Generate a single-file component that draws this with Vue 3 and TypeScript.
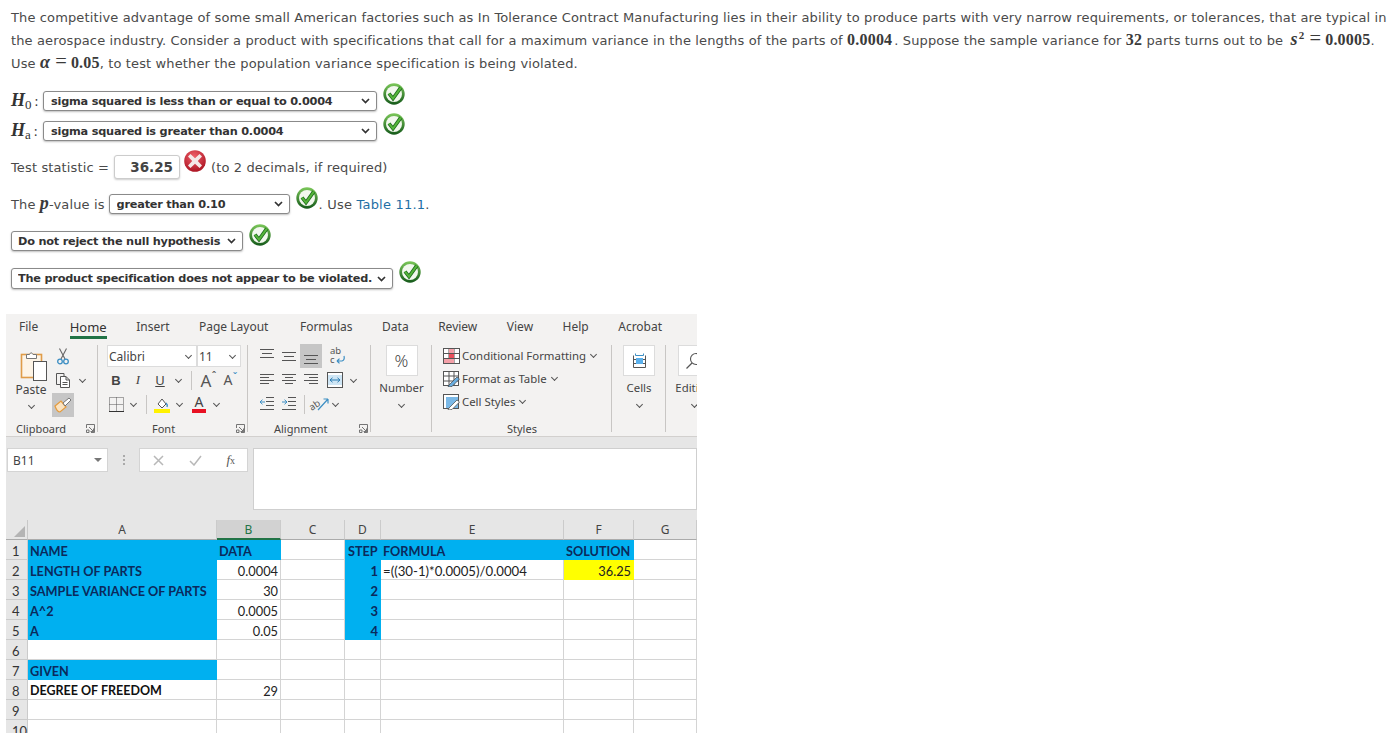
<script setup lang="ts">
type Cell = { t?: string; k?: string }
const B = 'blue'
const rows: Cell[][] = [
  [{ t: 'NAME', k: B }, { t: 'DATA', k: B }, {}, { t: 'STEP', k: B + ' step' }, { t: 'FORMULA', k: B }, { t: 'SOLUTION', k: B }, {}],
  [{ t: 'LENGTH OF PARTS', k: B }, { t: '0.0004', k: 'num' }, {}, { t: '1', k: B + ' num' }, { t: '=((30-1)*0.0005)/0.0004' }, { t: '36.25', k: 'yellow num' }, {}],
  [{ t: 'SAMPLE VARIANCE OF PARTS', k: B }, { t: '30', k: 'num' }, {}, { t: '2', k: B + ' num' }, {}, {}, {}],
  [{ t: 'A^2', k: B }, { t: '0.0005', k: 'num' }, {}, { t: '3', k: B + ' num' }, {}, {}, {}],
  [{ t: 'A', k: B }, { t: '0.05', k: 'num' }, {}, { t: '4', k: B + ' num' }, {}, {}, {}],
  [{}, {}, {}, {}, {}, {}, {}],
  [{ t: 'GIVEN', k: B }, {}, {}, {}, {}, {}, {}],
  [{ t: 'DEGREE OF FREEDOM', k: 'strong' }, { t: '29', k: 'num' }, {}, {}, {}, {}, {}],
  [{}, {}, {}, {}, {}, {}, {}],
  [{}, {}, {}, {}, {}, {}, {}],
]
const cols = ['A', 'B', 'C', 'D', 'E', 'F', 'G']
const tabs = ['File', 'Home', 'Insert', 'Page Layout', 'Formulas', 'Data', 'Review', 'View', 'Help', 'Acrobat']
</script>

<template>
  <div class="page">
    <svg class="defs" width="0" height="0" aria-hidden="true">
      <defs>
        <linearGradient id="gg" x1="0" y1="0" x2="0" y2="1">
          <stop offset="0" stop-color="#7cc85a" />
          <stop offset="1" stop-color="#14591a" />
        </linearGradient>
        <radialGradient id="rg" cx="45%" cy="30%" r="75%">
          <stop offset="0" stop-color="#f0606a" />
          <stop offset="1" stop-color="#a80f1e" />
        </radialGradient>
        <symbol id="ok" viewBox="0 0 22 22">
          <circle cx="11" cy="11" r="10.7" fill="url(#gg)" />
          <circle cx="11" cy="11" r="8" fill="#f2f8ee" />
          <path d="M6 10.5 L10 15.5 L17.8 4.6" fill="none" stroke="#1e6b1e" stroke-width="3.6" />
          <path d="M6 10.5 L10 15.5 L17.8 4.6" fill="none" stroke="#55b53a" stroke-width="2" />
        </symbol>
      </defs>
    </svg>

    <div class="question">
      <p class="line">The competitive advantage of some small American factories such as In Tolerance Contract Manufacturing lies in their ability to produce parts with very narrow requirements, or tolerances, that are typical in</p>
      <p class="line">the aerospace industry. Consider a product with specifications that call for a maximum variance in the lengths of the parts of <span class="m first">0.0004</span>. Suppose the sample variance for <span class="m">32</span> parts turns out to be <span class="m squared"><i>s</i><sup>2</sup><span class="eq">=</span>0.0005</span>.</p>
      <p class="line">Use <span class="m"><i>α</i><span class="eq">=</span>0.05</span>, to test whether the population variance specification is being violated.</p>

      <div class="row r-h0">
        <span class="hyp"><i>H</i><sub>0</sub><span class="colon">:</span></span>
        <select class="sel w334"><option>sigma squared is less than or equal to 0.0004</option></select>
        <svg class="mark m0"><use href="#ok" /></svg>
      </div>
      <div class="row r-ha">
        <span class="hyp"><i>H</i><sub>a</sub><span class="colon">:</span></span>
        <select class="sel w334"><option>sigma squared is greater than 0.0004</option></select>
        <svg class="mark m0"><use href="#ok" /></svg>
      </div>
      <div class="row r-test">
        <span>Test statistic =</span>
        <input class="ans" value="36.25" readonly />
        <svg class="mark bad" viewBox="0 0 22 22">
          <circle cx="11" cy="11" r="10.8" fill="url(#rg)" />
          <path d="M6.5 4 L11 8.2 L15.5 4 L18 6.5 L13.8 11 L18 15.5 L15.5 18 L11 13.8 L6.5 18 L4 15.5 L8.2 11 L4 6.5 Z" fill="#f4e8e8" />
        </svg>
        <span class="after">(to 2 decimals, if required)</span>
      </div>
      <div class="row r-p">
        <span>The <span class="m"><i>p</i></span>-value is</span>
        <select class="sel w181"><option>greater than 0.10</option></select>
        <svg class="mark m1"><use href="#ok" /></svg>
        <span class="use">. Use <a class="link">Table 11.1</a>.</span>
      </div>
      <div class="row r-c">
        <select class="sel w232"><option>Do not reject the null hypothesis</option></select>
        <svg class="mark m1"><use href="#ok" /></svg>
      </div>
      <div class="row r-d">
        <select class="sel w382"><option>The product specification does not appear to be violated.</option></select>
        <svg class="mark m1"><use href="#ok" /></svg>
      </div>
    </div>

    <div class="excel">
      <div class="tabs">
        <span v-for="t in tabs" :key="t" class="tab" :class="{ on: t === 'Home' }">{{ t }}</span>
      </div>

      <div class="ribbon">
        <!-- Clipboard -->
        <section class="group g-clip">
          <div class="body flexrow">
            <div class="bigcol paste">
              <svg class="paste-ico" width="27" height="31" viewBox="0 0 27 31">
                <rect x="1.5" y="4.5" width="20" height="23" fill="#fdf4e6" stroke="#e09c48" stroke-width="1.6" />
                <path d="M6.5 8.5 V4.5 H9.5 Q11 1 13 4.5 H16.5 V8.5 Z" fill="#fff" stroke="#777" />
                <rect x="13.5" y="11.5" width="13" height="19" fill="#fff" stroke="#555" />
              </svg>
              <span class="bigt t-paste">Paste</span>
              <i class="chev"></i>
            </div>
            <div class="smallcol">
              <div class="cell w22">
                <svg width="12" height="17" viewBox="0 0 12 17">
                  <path d="M2.5 0.5 L8 11 M9.5 0.5 L4 11" stroke="#666" stroke-width="1.1" fill="none" />
                  <circle cx="3" cy="13.5" r="2.3" fill="none" stroke="#3d8fc4" stroke-width="1.3" />
                  <circle cx="9" cy="13.5" r="2.3" fill="none" stroke="#3d8fc4" stroke-width="1.3" />
                </svg>
              </div>
              <div class="flexrow">
                <div class="cell w22">
                  <svg width="16" height="16" viewBox="0 0 16 16">
                    <path d="M5.5 12.5 H1.5 V1.5 H9 V4" fill="none" stroke="#555" />
                    <path d="M5.5 4.5 H11 L14.5 8 V15.5 H5.5 Z M11 4.5 V8 H14.5 M7.5 10.5 H12.5 M7.5 12.5 H12.5" fill="#fff" stroke="#555" />
                  </svg>
                </div>
                <div class="cell w16"><i class="chev"></i></div>
              </div>
              <div class="cell w22 hl painter">
                <svg width="18" height="16" viewBox="0 0 18 16">
                  <path d="M1 9 L7 4 L12 10 L6 15 Q3 15 1 9 Z" fill="#fbe3c0" stroke="#e59b3c" stroke-width="1.2" />
                  <path d="M9 6 L15 1 L17 3 L11 9 Z" fill="#fff" stroke="#777" />
                </svg>
              </div>
            </div>
          </div>
          <footer class="label">
            <span class="lt clipt">Clipboard</span>
            <svg class="launch"><use href="#lch" /></svg>
          </footer>
        </section>

        <!-- Font -->
        <section class="group g-font">
          <div class="body">
            <div class="tool">
              <div class="combo c-name"><span>Calibri</span><i class="chev"></i></div>
              <div class="combo c-size"><span>11</span><i class="chev"></i></div>
            </div>
            <div class="tool">
              <div class="cell w22"><b class="glyph b">B</b></div>
              <div class="cell w22"><i class="glyph it">I</i></div>
              <div class="cell w22"><u class="glyph">U</u></div>
              <div class="cell w14"><i class="chev"></i></div>
              <span class="vsep s1"></span>
              <div class="cell w22"><span class="aa big">A<small>ˆ</small></span></div>
              <div class="cell w22"><span class="aa">A<small class="blue-t">ˇ</small></span></div>
            </div>
            <div class="tool">
              <div class="cell w22">
                <svg width="15" height="15" viewBox="0 0 15 15">
                  <path d="M0.5 0.5 H14.5 V14.5 H0.5 Z M7.5 0.5 V14.5 M0.5 7.5 H14.5" fill="none" stroke="#555" stroke-dasharray="1 1" />
                  <path d="M0 14.5 H15" stroke="#333" />
                </svg>
              </div>
              <div class="cell w12"><i class="chev"></i></div>
              <span class="vsep s2"></span>
              <div class="cell w22">
                <svg width="17" height="17" viewBox="0 0 17 17">
                  <path d="M4 8 L8 3 L12 8 L8 12 Z" fill="#fff" stroke="#555" />
                  <path d="M12 7 Q14 9 13 11" stroke="#3d8fc4" stroke-width="1.4" fill="none" />
                  <rect x="0" y="13" width="16" height="4" fill="#fff200" />
                </svg>
              </div>
              <div class="cell w12"><i class="chev"></i></div>
              <div class="cell w22 m3">
                <span class="fontcolor">A</span>
              </div>
              <div class="cell w12"><i class="chev"></i></div>
            </div>
          </div>
          <footer class="label">
            <span class="lt fontt">Font</span>
            <svg class="launch"><use href="#lch" /></svg>
          </footer>
        </section>

        <!-- Alignment -->
        <section class="group g-align">
          <div class="body">
            <div class="tool">
              <div class="cell w22"><svg class="al"><path d="M1 2.5H15M3 6.5H13M1 10.5H15" /></svg></div>
              <div class="cell w22"><svg class="al"><path d="M1 5.5H15M3 9.5H13M1 13.5H15" /></svg></div>
              <div class="cell w22 hl"><svg class="al"><path d="M1 8.5H15M3 12.5H13M1 16.5H15" /></svg></div>
              <div class="cell w22 ml4">
                <svg class="vis" width="18" height="20" viewBox="0 0 18 20">
                  <text x="2" y="8" class="ico-t">ab</text>
                  <text x="2" y="17" class="ico-t">c</text>
                  <path d="M9 15 H14 Q17 14 16 10 M9 15 L11.5 12.6 M9 15 L11.5 17.4" fill="none" stroke="#3d8fc4" stroke-width="1.2" />
                </svg>
              </div>
            </div>
            <div class="tool">
              <div class="cell w22"><svg class="al"><path d="M1 3.5H15M1 6.5H10M1 9.5H15M1 12.5H10" /></svg></div>
              <div class="cell w22"><svg class="al"><path d="M1 3.5H15M4 6.5H12M1 9.5H15M4 12.5H12" /></svg></div>
              <div class="cell w22"><svg class="al"><path d="M1 3.5H15M6 6.5H15M1 9.5H15M6 12.5H15" /></svg></div>
              <div class="cell w24 ml2">
                <svg width="16" height="16" viewBox="0 0 16 16">
                  <rect x="0.5" y="0.5" width="15" height="15" fill="#fff" stroke="#555" />
                  <rect x="1" y="3" width="14" height="10" fill="#cfe6f5" />
                  <path d="M3 8 H13 M3 8 L5.5 5.8 M3 8 L5.5 10.2 M13 8 L10.5 5.8 M13 8 L10.5 10.2" fill="none" stroke="#2b7cb3" />
                </svg>
              </div>
              <div class="cell w14"><i class="chev"></i></div>
            </div>
            <div class="tool">
              <div class="cell w22"><svg class="al"><path d="M7 2.5H15M7 6.5H15M7 10.5H15M1 14.5H15" /><path class="ar" d="M1 7H6M1 7L3.5 4.7M1 7L3.5 9.3" /></svg></div>
              <div class="cell w22"><svg class="al"><path d="M7 2.5H15M7 6.5H15M7 10.5H15M1 14.5H15" /><path class="ar" d="M1 7H6M6 7L3.5 4.7M6 7L3.5 9.3" /></svg></div>
              <span class="vsep s3"></span>
              <div class="cell w20 ml5">
                <svg class="vis" width="20" height="16" viewBox="0 0 20 16">
                  <text x="0" y="13" class="ico-t" transform="rotate(-35 4 11)">ab</text>
                  <path d="M8 14 L18 3 M18 3 H13.5 M18 3 V7.5" fill="none" stroke="#3d8fc4" stroke-width="1.2" />
                </svg>
              </div>
              <div class="cell w10"><i class="chev"></i></div>
            </div>
          </div>
          <footer class="label">
            <span class="lt alignt">Alignment</span>
            <svg class="launch"><use href="#lch" /></svg>
          </footer>
        </section>

        <!-- Number -->
        <section class="group g-num">
          <div class="body bigcol">
            <div class="bigbox"><span class="pct">%</span></div>
            <span class="bigt">Number</span>
            <i class="chev"></i>
          </div>
          <footer class="label"></footer>
        </section>

        <!-- Styles -->
        <section class="group g-styles">
          <div class="body">
            <div class="styleitem">
              <svg width="17" height="16" viewBox="0 0 17 16">
                <rect x="0.5" y="0.5" width="16" height="15" fill="#fff" stroke="#555" />
                <path d="M1 5.5H16M1 10.5H16M6 1V15M11 1V15" stroke="#555" />
                <rect x="6" y="6" width="5" height="4" fill="#e9505c" />
                <rect x="1" y="11" width="10" height="4" fill="#f4a0a8" />
                <rect x="6" y="1" width="5" height="4" fill="#f4a0a8" />
              </svg>
              <span>Conditional Formatting</span><i class="chev"></i>
            </div>
            <div class="styleitem">
              <svg width="17" height="16" viewBox="0 0 17 16">
                <rect x="0.5" y="0.5" width="15" height="14" fill="#fff" stroke="#555" />
                <path d="M1 5H15M1 10H15M6 1V15M11 1V15" stroke="#555" />
                <path d="M6 14 L14 6 L16.5 8 L9 15.5 L5 16 Z" fill="#6aaee0" stroke="#444" stroke-width="0.7" />
              </svg>
              <span>Format as Table</span><i class="chev"></i>
            </div>
            <div class="styleitem">
              <svg width="17" height="16" viewBox="0 0 17 16">
                <rect x="0.5" y="0.5" width="15" height="14" fill="#fff" stroke="#555" />
                <rect x="3" y="3" width="12" height="11" fill="#7ab8e6" />
                <path d="M6 14 L14 6 L16.5 8 L9 15.5 L5 16 Z" fill="#fff" stroke="#444" stroke-width="0.7" />
              </svg>
              <span>Cell Styles</span><i class="chev"></i>
            </div>
          </div>
          <footer class="label"><span class="lt stylest">Styles</span></footer>
        </section>

        <!-- Cells -->
        <section class="group g-cells">
          <div class="body bigcol">
            <div class="bigbox">
              <svg width="15" height="15" viewBox="0 0 15 15">
                <path d="M1.5 2.5V14.5H13.5V2.5M1.5 6.5H13.5M1.5 10.5H13.5" fill="none" stroke="#555" />
                <path d="M3.5 0.5V2.5H11.5V0.5" fill="none" stroke="#3d8fc4" />
                <rect x="4" y="5" width="7" height="6" fill="#5ab0ec" />
              </svg>
            </div>
            <span class="bigt">Cells</span>
            <i class="chev"></i>
          </div>
          <footer class="label"></footer>
        </section>

        <!-- Editing -->
        <section class="group g-edit">
          <div class="body bigcol">
            <div class="bigbox">
              <svg width="18" height="18" viewBox="0 0 18 18">
                <circle cx="11" cy="7" r="5.5" fill="none" stroke="#555" stroke-width="1.1" />
                <path d="M7 11 L1.5 16.5" stroke="#555" stroke-width="1.3" />
              </svg>
            </div>
            <span class="bigt">Editing</span>
            <i class="chev"></i>
          </div>
          <footer class="label"></footer>
        </section>

        <svg class="defs" width="0" height="0" aria-hidden="true">
          <symbol id="lch" viewBox="0 0 9 9">
            <path d="M0.5 4V0.5H8.5V8.5H5M3 3L7.5 7.5M7.5 4.5V7.5H4.5M0.5 6H3V8.5H0.5Z" fill="none" stroke="#666" stroke-width="0.9" />
          </symbol>
        </svg>
      </div>

      <div class="fbar">
        <div class="namebox"><span>B11</span><i class="tri"></i></div>
        <div class="dots"><i></i><i></i><i></i></div>
        <div class="fbtns">
          <svg width="11" height="11" viewBox="0 0 11 11"><path d="M1 1L10 10M10 1L1 10" stroke="#b8b8b8" stroke-width="1.5" /></svg>
          <svg width="13" height="11" viewBox="0 0 13 11"><path d="M1 6L5 10L12 1" fill="none" stroke="#b8b8b8" stroke-width="1.5" /></svg>
          <span class="fx"><i>f</i><small>x</small></span>
        </div>
        <div class="finput"></div>
      </div>

      <div class="sheet">
        <div class="corner"><i></i></div>
        <div v-for="c in cols" :key="c" class="ch" :class="{ picked: c === 'B' }">{{ c }}</div>
        <template v-for="(r, i) in rows" :key="i">
          <div class="rh">{{ i + 1 }}</div>
          <div v-for="(c, j) in r" :key="j" class="td" :class="c.k">{{ c.t }}</div>
        </template>
      </div>
    </div>
  </div>
</template>

<style scoped>
.page {
  width: 1388px;
  height: 743px;
  overflow: hidden;
  background: #fff;
  font-family: "DejaVu Sans", Verdana, sans-serif;
  font-size: 13px;
  color: #4a4a4a;
}
.defs { position: absolute; }
.vis { overflow: visible; }
.question { padding: 6px 0 0 11px; height: 314px; box-sizing: border-box; }
.line { margin: 0; height: 23px; line-height: 23px; white-space: nowrap; letter-spacing: 0.13px; }
.m { font-family: "Liberation Serif", serif; font-size: 16px; line-height: 0; font-weight: bold; color: #3a3a3a; letter-spacing: 0.2px; }
.m i { font-weight: bold; font-size: 18px; line-height: 0; }
.m sup { font-size: 11px; line-height: 0; margin-left: 1px; }
.first { margin-right: 2px; }
.squared { margin-left: 3px; }
.eq { font-size: 20.5px; font-weight: normal; margin: 0 4px 0 5px; line-height: 0; }
.row { display: flex; align-items: center; white-space: nowrap; letter-spacing: 0.13px; }
.r-h0 { margin-top: 16px; height: 20px; }
.r-ha { margin-top: 10px; height: 20px; }
.r-test { margin-top: 14px; height: 24px; }
.r-p { margin-top: 15px; height: 20px; }
.r-c { margin-top: 17px; height: 20px; }
.r-d { margin-top: 17px; height: 21px; }
.hyp { font-family: "Liberation Serif", serif; font-size: 18px; line-height: 1; margin-top: -3px; font-weight: bold; color: #333; width: 32px; flex: none; letter-spacing: 0; }
.hyp sub { font-size: 13px; font-weight: normal; line-height: 0; vertical-align: -3px; }
.colon { font-size: 14px; font-weight: normal; margin-left: 3px; }
.sel {
  display: block;
  height: 100%;
  box-sizing: border-box;
  appearance: none;
  font-family: "DejaVu Sans", Verdana, sans-serif;
  font-size: 11.3px;
  font-weight: bold;
  color: #333;
  background: #fff url("data:image/svg+xml,%3Csvg xmlns='http://www.w3.org/2000/svg' width='9' height='6'%3E%3Cpath d='M1 1l3.5 3.5L8 1' fill='none' stroke='%23333' stroke-width='1.7'/%3E%3C/svg%3E") no-repeat right 6px center;
  border: 1px solid #8a8a8a;
  border-radius: 3px;
  box-shadow: 0 1px 2px rgba(0, 0, 0, 0.25);
  padding: 0 0 0 6px;
  letter-spacing: -0.22px;
}
.r-h0 .sel, .r-ha .sel, .r-p .sel { padding-left: 7px; }
.w334 { width: 334px; }
.w181 { width: 181px; margin-left: 4px; }
.w232 { width: 232px; }
.w382 { width: 382px; }
.mark { width: 22px; height: 22px; flex: none; margin-left: 6px; }
.m0 { margin-top: -14px; }
.m1 { margin-top: -12px; margin-left: 6px; }
.r-d .m1 { margin-top: -14px; }
.ans {
  width: 66px;
  height: 24px;
  box-sizing: border-box;
  margin-left: 5px;
  border: 1px solid #ccc;
  border-radius: 3px;
  box-shadow: 0 1px 2px rgba(0, 0, 0, 0.2);
  text-align: right;
  padding: 0 6px 0 0;
  font: bold 13.5px "DejaVu Sans", sans-serif;
  color: #444;
}
.bad { margin-left: 4px; margin-top: -12px; }
.after { margin-left: 5px; }
.use { margin-left: 1px; letter-spacing: 0.2px; }
.link { color: #1f6fa5; }

.excel {
  width: 691px;
  height: 419px;
  margin-left: 6px;
  overflow: hidden;
  font-family: "Noto Sans", sans-serif;
  font-size: 12px;
  color: #444;
  background: #f3f2f1;
}
.tabs { display: flex; height: 24px; padding-left: 13px; gap: 29.5px; align-items: center; background: #f3f2f1; }
.tab { position: relative; line-height: 26px; height: 24px; }
.tab:nth-child(2), .tab:nth-child(5) { margin-left: 2px; }
.tab.on { color: #333; font-size: 13px; }
.tab.on::after { content: ""; position: absolute; left: 0; right: 0; bottom: -1px; height: 3px; background: #217346; }

.ribbon { display: flex; height: 99px; box-sizing: border-box; padding-top: 6px; border-bottom: 1px solid #d2d0ce; overflow: hidden; }
.group { flex: none; display: flex; flex-direction: column; box-sizing: border-box; position: relative; }
.group::after { content: ""; position: absolute; right: 0; top: 1px; bottom: 4px; width: 1px; background: #c8c6c4; }
.g-clip { width: 92px; }
.g-font { width: 150px; padding-left: 7px; }
.g-align { width: 123px; padding-left: 8px; }
.g-num { width: 61px; }
.g-styles { width: 180px; padding-left: 11px; }
.g-cells { width: 54px; }
.g-edit { width: 56px; flex: none; }
.g-edit::after { display: none; }
.body { height: 76px; }
.flexrow { display: flex; align-items: flex-start; }
.bigcol { display: flex; flex-direction: column; align-items: center; font-size: 11.4px; }
.paste { width: 50px; padding-top: 6px; box-sizing: border-box; height: 76px; font-size: 12px; }
.paste-ico { margin-left: 5px; flex: none; }
.paste .t-paste { margin-top: 0; line-height: 18px; }
.paste .chev { margin-top: 5px; }
.smallcol { display: flex; flex-direction: column; margin-left: -4px; }
.cell { height: 24px; display: flex; align-items: center; justify-content: center; flex: none; box-sizing: border-box; }
.w22 { width: 22px; }
.w24 { width: 22px; }
.w20 { width: 20px; }
.w16 { width: 16px; }
.w14 { width: 14px; }
.w12 { width: 12px; }
.w10 { width: 10px; }
.ml4 { margin-left: 4px; }
.ml2 { margin-left: 2px; }
.ml5 { margin-left: 5px; }
.m3 { margin-left: 3px; }
.hl { background: #c6c6c6; }
.painter { margin-top: 1px; }
.chev { display: block; flex: none; width: 4px; height: 4px; border-right: 1px solid #555; border-bottom: 1px solid #555; transform: translateY(-1px) rotate(45deg); }
.tool { display: flex; align-items: center; height: 24px; }
.combo { display: flex; align-items: center; justify-content: space-between; box-sizing: border-box; height: 22px; background: #fff; border: 1px solid #dcdcdc; padding: 0 5px 0 1px; color: #444; }
.c-name { width: 90px; margin-left: 2px; }
.c-size { width: 44px; }
.glyph { font-size: 13px; color: #444; font-style: normal; }
.glyph.b { font-family: "Liberation Sans", sans-serif; font-weight: bold; }
.glyph.it { font-family: "Liberation Serif", serif; font-style: italic; }
.vsep { width: 1px; height: 19px; background: #c8c6c4; flex: none; }
.s1 { margin: 0 3px 0 6px; }
.s2 { margin: 0 4px 0 7px; }
.s3 { margin-left: 4px; }
.aa { font-size: 14px; line-height: 1; position: relative; color: #555; }
.aa.big { font-size: 17px; }
.aa small { font-size: 11px; position: absolute; top: -2px; right: -5px; }
.blue-t { color: #3d8fc4; }
.fontcolor { font-size: 14px; color: #444; line-height: 14px; border-bottom: 4px solid #e81123; padding: 0 3px; }
.al { width: 16px; height: 18px; fill: none; stroke: #555; stroke-width: 1; }
.al .ar { stroke: #3d8fc4; }
.ico-t { font: 9.5px "Noto Sans", sans-serif; fill: #555; }
.label { height: 16px; box-sizing: border-box; padding-top: 2px; position: relative; display: flex; align-items: center; font-size: 11px; line-height: 14px; }
.lt { position: relative; }
.clipt { margin-left: 10px; }
.fontt { margin-left: 47px; }
.alignt { margin-left: 18px; }
.stylest { margin-left: 64px; }
.launch { width: 9px; height: 9px; position: absolute; right: 3px; top: 4px; }
.bigbox { width: 32px; height: 31px; margin-top: 1px; box-sizing: border-box; background: #fff; border: 1px solid #dcdcdc; display: flex; align-items: center; justify-content: center; flex: none; }
.pct { font-size: 17px; color: #444; font-weight: 300; }
.bigt { line-height: 18px; margin-top: 3px; white-space: nowrap; }
.body.bigcol .chev { margin-top: 6px; }
.styleitem { display: flex; align-items: center; gap: 2px; height: 23px; white-space: nowrap; font-size: 11.4px; }
.styleitem .chev { margin-left: 3px; }

.fbar { display: flex; align-items: flex-start; height: 83px; box-sizing: border-box; padding-top: 11px; background: #e6e6e6; font-family: "Noto Sans", sans-serif; }
.namebox { width: 101px; height: 24px; margin-left: 1px; box-sizing: border-box; background: #fff; border: 1px solid #d4d4d4; display: flex; align-items: center; justify-content: space-between; padding: 0 5px 0 5px; }
.tri { width: 0; height: 0; border-left: 4px solid transparent; border-right: 4px solid transparent; border-top: 4px solid #777; }
.dots { width: 31px; height: 24px; display: flex; flex-direction: column; align-items: center; justify-content: center; gap: 2px; }
.dots i { width: 2px; height: 2px; background: #aaa; display: block; }
.fbtns { width: 109px; height: 24px; box-sizing: border-box; background: #fff; border: 1px solid #d4d4d4; display: flex; align-items: center; justify-content: space-between; padding: 0 12px 0 13px; }
.fx { font-family: "Liberation Serif", serif; font-size: 13px; color: #555; }
.fx small { font-size: 10px; }
.finput { width: 444px; height: 62px; margin-left: 5px; box-sizing: border-box; background: #fff; border: 1px solid #cfcfcf; }

.sheet {
  display: grid;
  grid-template-columns: 22px 189px 64px 64px 36px 183px 70px 63px;
  grid-auto-rows: 20px;
  background: #fff;
  font-family: Lato, sans-serif;
  font-size: 13.2px;
  color: #222;
}
.corner { background: #e6e6e6; border-right: 1px solid #c8c8c8; position: relative; border-bottom: 1px solid #ababab; box-sizing: border-box; display: flex; align-items: flex-end; justify-content: flex-end; padding: 0 2px 2px 0; }
.corner i { width: 0; height: 0; border-left: 11px solid transparent; border-bottom: 11px solid #b4b4b4; }
.ch { background: #e6e6e6; border-right: 1px solid #cbcbcb; border-bottom: 1px solid #ababab; box-sizing: border-box; text-align: center; line-height: 20px; color: #444; font-family: "Noto Sans", sans-serif; font-size: 12px; }
.ch.picked { background: #d2d2d2; border-bottom: 2px solid #217346; color: #217346; }
.rh { background: #e6e6e6; border-right: 1px solid #cbcbcb; border-bottom: 1px solid #cbcbcb; box-sizing: border-box; padding-left: 6px; line-height: 22px; font-size: 13px; color: #333; }
.td { box-sizing: border-box; border-right: 1px solid #d4d4d4; border-bottom: 1px solid #d4d4d4; padding: 0 2px; line-height: 22px; white-space: nowrap; overflow: visible; }
.td.blue { background: #00b0f0; border-color: #00b0f0; font-weight: bold; color: #0b2a5c; font-size: 12.7px; }
.td.num { text-align: right; font-size: 12.8px; }
.td.blue.num { font-size: 13px; }
.td.step { padding-left: 3px; }
.td.yellow { background: #ffff00; border-color: #ffff00; }
.td.strong { font-weight: bold; color: #111; font-size: 12.5px; }
</style>
